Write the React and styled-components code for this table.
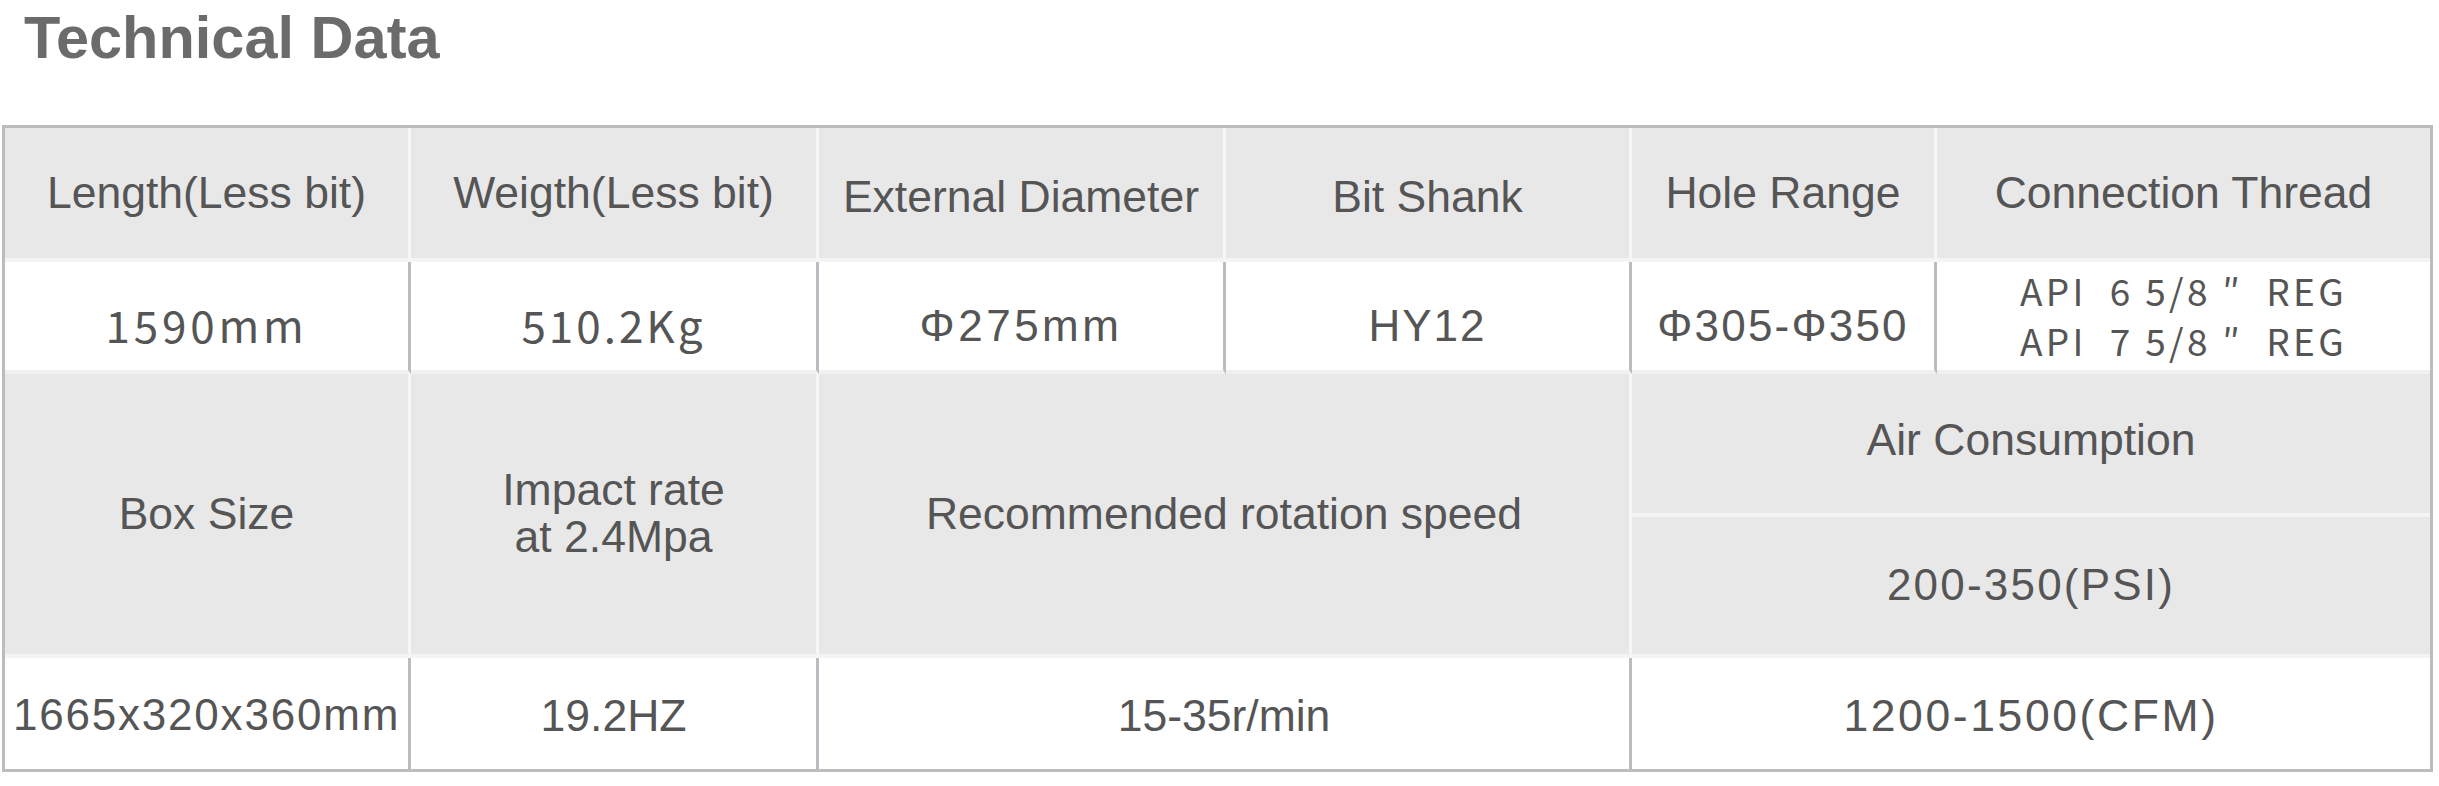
import React from "react";
import styled, { createGlobalStyle } from "styled-components";

const GlobalStyle = createGlobalStyle`
  body {
    margin: 0;
    background: #ffffff;
    font-family: "Liberation Sans", Arial, sans-serif;
  }
`;

const Page = styled.div`
  width: 2439px;
  padding: 8px 0 0 0;
`;

const Title = styled.h1`
  margin: 0 0 0 24px;
  font-size: 59.5px;
  line-height: 60px;
  font-weight: 700;
  color: #6b6b6b;
`;

const Table = styled.div`
  margin: 57px 0 0 2px;
  width: 2431px;
  box-sizing: border-box;
  border: 3px solid #bcbcbc;
  display: grid;
  grid-template-columns: 406px 408px 407px 406px 305px 493px;
  grid-template-rows: 134px 112px 143px 141px 111px;
  grid-template-areas:
    "h1 h2 h3 h4 h5 h6"
    "d1 d2 d3 d4 d5 d6"
    "b1 b2 rs rs ac ac"
    "b1 b2 rs rs ps ps"
    "v1 v2 vr vr vc vc";
`;

const Cell = styled.div`
  grid-area: ${(p) => p.area};
  box-sizing: border-box;
  display: flex;
  flex-direction: column;
  align-items: center;
  justify-content: center;
  text-align: center;
  background: ${(p) => (p.head ? "#e8e8e8" : "#ffffff")};
  color: #555555;
  border-right: ${(p) =>
    p.last ? "none" : p.head ? "3px solid #f6f6f6" : "3px solid #b9bdc1"};
  border-bottom: ${(p) =>
    p.bottom ? "none" : p.head ? "4px solid #f4f4f4" : "4px solid #f0f0f0"};
  font-family: ${(p) =>
    p.cjk
      ? '"Noto Sans CJK SC", "Noto Sans", sans-serif'
      : '"Liberation Sans", Arial, sans-serif'};
  font-size: ${(p) => p.size || 44.5}px;
  letter-spacing: ${(p) => p.spacing || 0}px;
  line-height: ${(p) => p.lh || 1.15};
  white-space: pre;
  padding-top: ${(p) => p.shift || 0}px;
  padding-bottom: ${(p) => p.lift || 0}px;
`;

export default function App() {
  return (
    <>
      <GlobalStyle />
      <Page>
        <Title>Technical Data</Title>
        <Table>
          <Cell area="h1" head>Length(Less bit)</Cell>
          <Cell area="h2" head>Weigth(Less bit)</Cell>
          <Cell area="h3" head shift={8}>External Diameter</Cell>
          <Cell area="h4" head shift={8}>Bit Shank</Cell>
          <Cell area="h5" head>Hole Range</Cell>
          <Cell area="h6" head last>Connection Thread</Cell>

          <Cell area="d1" cjk size={44} spacing={3.8} shift={16}>1590mm</Cell>
          <Cell area="d2" cjk size={44} spacing={3} shift={16}>510.2Kg</Cell>
          <Cell area="d3" size={44} spacing={3.5} shift={20}>Φ275mm</Cell>
          <Cell area="d4" size={44} spacing={2} shift={20}>HY12</Cell>
          <Cell area="d5" size={44} spacing={2.2} shift={20}>Φ305-Φ350</Cell>
          <Cell area="d6" cjk last size={37} spacing={3.3} lh={1.35}>
            {"API  6 5/8 ″  REG\nAPI  7 5/8 ″  REG"}
          </Cell>

          <Cell area="b1" head>Box Size</Cell>
          <Cell area="b2" head lh={1.05}>{"Impact rate\nat 2.4Mpa"}</Cell>
          <Cell area="rs" head>Recommended rotation speed</Cell>
          <Cell area="ac" head last lift={8}>Air Consumption</Cell>
          <Cell area="ps" head last size={44} spacing={2.2}>200-350(PSI)</Cell>

          <Cell area="v1" bottom size={44} spacing={1.8} shift={4}>1665x320x360mm</Cell>
          <Cell area="v2" bottom shift={4}>19.2HZ</Cell>
          <Cell area="vr" bottom shift={4}>15-35r/min</Cell>
          <Cell area="vc" bottom last spacing={2.6} shift={4}>1200-1500(CFM)</Cell>
        </Table>
      </Page>
    </>
  );
}
